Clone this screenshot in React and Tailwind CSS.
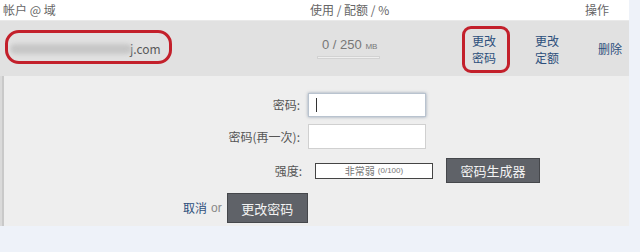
export default function App() {
  return (
    <div className="w-[640px] h-[252px] bg-[#eef2f9] overflow-hidden relative text-[12px] text-[#666] font-['Noto_Sans_CJK_SC','Liberation_Sans',sans-serif] leading-none">
      {/* header */}
      <div className="w-[629px] h-[20px] bg-white flex items-center">
        <div className="w-[310px] pl-[3px]">帐户 @ 域</div>
        <div className="w-[275px]">使用 / 配额 / %</div>
        <div>操作</div>
      </div>
      {/* account row */}
      <div className="w-[629px] h-[56px] bg-[#e1e1e1] border-t border-[#e9e9e9] flex items-center relative">
        <div className="w-[300px] pl-[10px] flex items-center">
          <div className="w-[122px] h-[10px] rounded-full bg-[#c6c6c6] blur-[2px]"></div>
          <span className="text-[#5a5a5a] text-[12px] -ml-[2px]">j.com</span>
        </div>
        <div className="w-[100px] pl-[17px] flex flex-col items-start">
          <div className="pl-[5px] text-[13px] text-[#777] font-['Liberation_Sans',sans-serif] whitespace-nowrap">
            0 / 250 <span className="text-[8px]">MB</span>
          </div>
          <div className="mt-[5px] w-[63px] h-[3px] bg-[#efefef] border border-[#d2d2d2]"></div>
        </div>
        <div className="ml-[63px] w-[63px] pl-[9px] text-[#2d4f7c] text-[12px] leading-[17px]">
          <div>更改</div>
          <div>密码</div>
        </div>
        <div className="w-[63px] pl-[9px] text-[#2d4f7c] text-[12px] leading-[17px]">
          <div>更改</div>
          <div>定额</div>
        </div>
        <div className="w-[30px] pl-[9px] text-[#2d4f7c] text-[12px] whitespace-nowrap">删除</div>
        {/* annotations */}
        <div className="absolute left-[5px] top-[9px] w-[167px] h-[34px] border-[3px] border-[#c3202b] rounded-[14px]"></div>
        <div className="absolute left-[462px] top-[5px] w-[48px] h-[47px] border-[3px] border-[#c3202b] rounded-[9px]"></div>
      </div>
      {/* edit panel */}
      <div className="w-[629px] h-[150px] bg-[#eeeeee] border-l-[2px] border-[#dadada] shadow-[inset_2px_0_0_#c9c9c9] pt-[17px] flex flex-col">
        <div className="flex items-center h-[24px]">
          <div className="w-[298px] text-right text-[#555]">密码:</div>
          <div className="ml-[8px] w-[118px] h-[24px] bg-white border border-[#b9c3cf] shadow-[0_0_3px_rgba(80,100,130,0.55)] flex items-center pl-[7px]">
            <div className="w-[1px] h-[14px] bg-[#333]"></div>
          </div>
        </div>
        <div className="flex items-center h-[25px] mt-[7px]">
          <div className="w-[298px] text-right text-[#555]">密码(再一次):</div>
          <div className="ml-[8px] w-[118px] h-[25px] bg-white border border-[#d0d0d0]"></div>
        </div>
        <div className="flex items-center h-[25px] mt-[9px]">
          <div className="w-[300px] text-right text-[#555]">强度:</div>
          <div className="ml-[13px] w-[118px] h-[16px] bg-white border border-[#444] flex items-center justify-center text-[10px] text-[#777] whitespace-nowrap">
            非常弱 <span className="ml-[3px] text-[8px] font-['Liberation_Sans',sans-serif]">(0/100)</span>
          </div>
          <div className="ml-[13px] w-[94px] h-[25px] bg-[#5f6268] border border-[#45474b] text-[#f3f3f3] text-[13px] flex items-center justify-center">密码生成器</div>
        </div>
        <div className="flex items-center h-[30px] mt-[10px] pl-[181px]">
          <span className="text-[#2d4f7c] text-[12px]">取消</span>
          <span className="ml-[4px] text-[#888] text-[12px] font-['Liberation_Sans',sans-serif]">or</span>
          <div className="ml-[5px] w-[81px] h-[30px] bg-[#5f6268] border border-[#45474b] text-[#f3f3f3] text-[13px] flex items-center justify-center">更改密码</div>
        </div>
      </div>
    </div>
  );
}
